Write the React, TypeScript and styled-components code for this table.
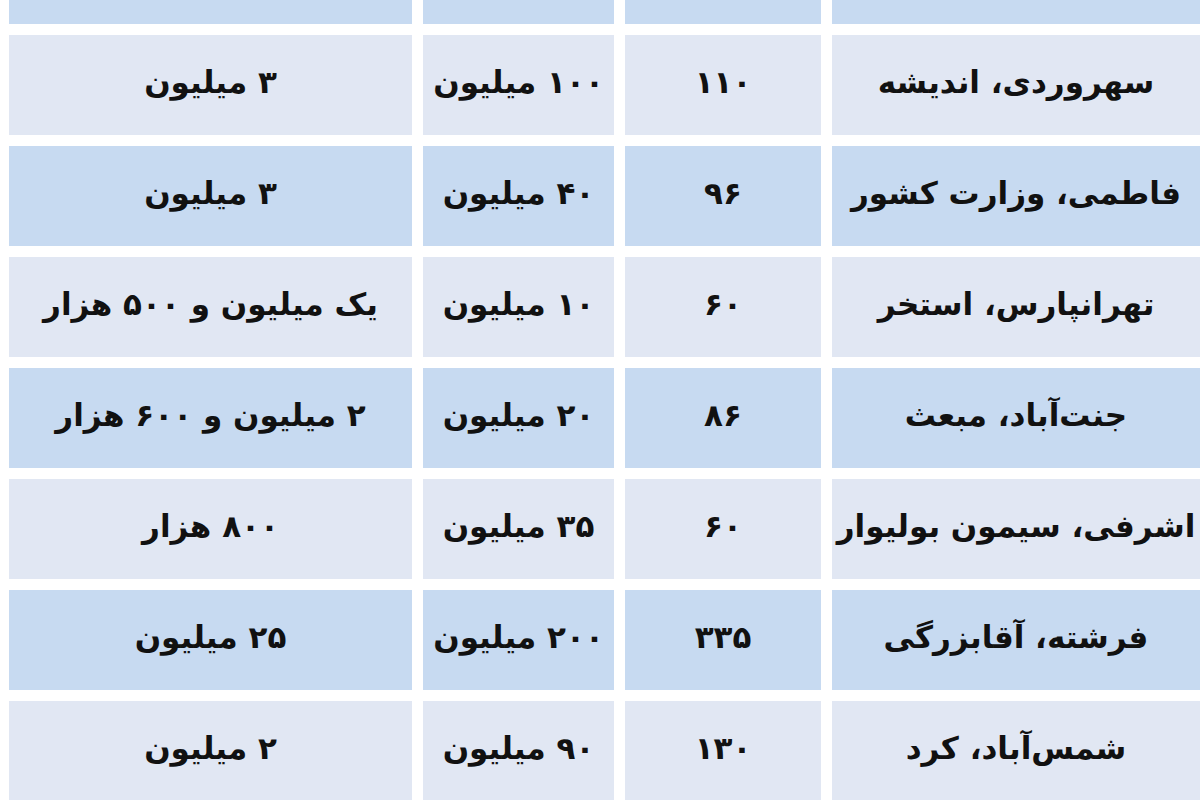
import React from 'react';
import styled, { createGlobalStyle } from 'styled-components';

const GlobalStyle = createGlobalStyle`
  html, body {
    margin: 0;
    padding: 0;
    background: #ffffff;
    overflow: hidden;
  }
`;

const Table = styled.div`
  direction: rtl;
  display: grid;
  grid-template-columns: 368px 196px 191px 403px;
  grid-template-rows: 24px;
  grid-auto-rows: 100px;
  column-gap: 11px;
  row-gap: 11px;
  padding-left: 9px;
  width: 1200px;
  height: 800px;
  box-sizing: border-box;
  background: #ffffff;
  font-family: 'DejaVu Sans', 'Noto Sans', sans-serif;
`;

const Cell = styled.div<{ $tone: 'blue' | 'light' }>`
  display: flex;
  align-items: center;
  justify-content: center;
  padding-bottom: 6px;
  box-sizing: border-box;
  background: ${(p) => (p.$tone === 'blue' ? '#c7daf1' : '#e1e7f3')};
  color: #111111;
  font-size: 31px;
  font-weight: bold;
  white-space: nowrap;
  overflow: hidden;
`;

type Rental = {
  place: string;
  area: string;
  deposit: string;
  rent: string;
};

const rentals: Rental[] = [
  { place: 'سهروردی، اندیشه', area: '۱۱۰', deposit: '۱۰۰ میلیون', rent: '۳ میلیون' },
  { place: 'فاطمی، وزارت کشور', area: '۹۶', deposit: '۴۰ میلیون', rent: '۳ میلیون' },
  { place: 'تهرانپارس، استخر', area: '۶۰', deposit: '۱۰ میلیون', rent: 'یک میلیون و ۵۰۰ هزار' },
  { place: 'جنت‌آباد، مبعث', area: '۸۶', deposit: '۲۰ میلیون', rent: '۲ میلیون و ۶۰۰ هزار' },
  { place: 'اشرفی، سیمون بولیوار', area: '۶۰', deposit: '۳۵ میلیون', rent: '۸۰۰ هزار' },
  { place: 'فرشته، آقابزرگی', area: '۳۳۵', deposit: '۲۰۰ میلیون', rent: '۲۵ میلیون' },
  { place: 'شمس‌آباد، کرد', area: '۱۳۰', deposit: '۹۰ میلیون', rent: '۲ میلیون' },
];

const App = () => {
  return (
    <>
      <GlobalStyle />
      <Table>
        {/* header row, mostly cut off at the top */}
        {[0, 1, 2, 3].map((i) => (
          <Cell key={'head' + i} $tone="blue" />
        ))}
        {rentals.map((r, idx) => {
          const tone = idx % 2 === 0 ? 'light' : 'blue';
          return (
            <React.Fragment key={r.place}>
              <Cell $tone={tone}>{r.place}</Cell>
              <Cell $tone={tone}>{r.area}</Cell>
              <Cell $tone={tone}>{r.deposit}</Cell>
              <Cell $tone={tone}>{r.rent}</Cell>
            </React.Fragment>
          );
        })}
      </Table>
    </>
  );
};

export default App;
